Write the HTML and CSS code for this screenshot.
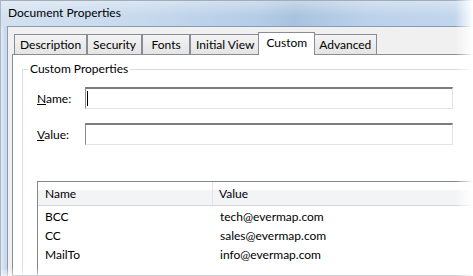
FILE: index.html
```html
<!DOCTYPE html>
<html lang="en">
  <head>
    <meta charset="UTF-8" />
    <meta name="viewport" content="width=device-width, initial-scale=1.0" />
    <title>Document Properties</title>
    <link rel="stylesheet" href="styles.css">
  </head>
  <body>
    <div class="window">
      <!-- title bar -->
      <div class="title-bar">Document Properties</div>

      <div class="frame">
        <div class="client">
          <!-- tabs -->
          <div class="tabs">
            <div class="tab">Description</div>
            <div class="tab">Security</div>
            <div class="tab">Fonts</div>
            <div class="tab">Initial View</div>
            <div class="tab active">Custom</div>
            <div class="tab">Advanced</div>
          </div>

          <div class="tab-panel">
            <fieldset class="group">
              <legend>Custom Properties</legend>

              <div class="field-row">
                <label class="field-label"><u>N</u>ame:</label>
                <div class="text-box"><span class="caret"></span></div>
              </div>
              <div class="field-row">
                <label class="field-label"><u>V</u>alue:</label>
                <div class="text-box"></div>
              </div>

              <!-- property list -->
              <div class="prop-list">
                <div class="list-header">
                  <div class="col-name">Name</div>
                  <div class="col-value">Value</div>
                </div>
                <div class="list-body">
                  <div class="list-row">
                    <div class="col-name">BCC</div>
                    <div class="col-value">tech@evermap.com</div>
                  </div>
                  <div class="list-row">
                    <div class="col-name">CC</div>
                    <div class="col-value">sales@evermap.com</div>
                  </div>
                  <div class="list-row">
                    <div class="col-name">MailTo</div>
                    <div class="col-value">info@evermap.com</div>
                  </div>
                </div>
              </div>
            </fieldset>
          </div>
        </div>
      </div>

      <!-- screenshot edge fades -->
      <div class="fade-right"></div>
      <div class="fade-bottom"></div>
    </div>
  </body>
</html>
```

FILE: styles.css
```css
body {
  margin: 0;
  font-family: Lato, "Noto Sans", sans-serif;
  font-size: 12px;
  color: #000;
  background: #fff;
  overflow: hidden;
}

.window {
  position: relative;
  width: 473px;
  height: 276px;
  overflow: hidden;
  display: flex;
  flex-direction: column;
  background: linear-gradient(to right, #e4ecf5, #c9daec 4px, #c3d6eb);
  border-left: 1px solid #a9b6c4;
  box-sizing: border-box;
}

/* title bar */
.title-bar {
  flex-shrink: 0;
  height: 26px;
  box-sizing: border-box;
  padding: 4px 0 0 7px;
  line-height: 16px;
  border-top: 1px solid #a3adb9;
  background:
    linear-gradient(rgba(255, 255, 255, 0.35), rgba(255, 255, 255, 0) 60%),
    linear-gradient(to right, #d3e1f0, #c6d9ed 30%, #b4cce6 55%, #a9c3df 62%, #bcd2ea 78%, #c3d7ed);
}

.frame {
  flex: 1;
  min-height: 0;
  display: flex;
  padding-left: 6px;
}

.client {
  flex: 1;
  min-height: 0;
  display: flex;
  flex-direction: column;
  background: #f0f0f0;
  border-top: 1px solid #8e9aa8;
  border-left: 1px solid #8e9aa8;
}

/* tabs */
.tabs {
  flex-shrink: 0;
  display: flex;
  align-items: flex-end;
  height: 27px;
  padding-left: 6px;
}
.tab {
  height: 20px;
  min-width: 48px;
  box-sizing: border-box;
  padding: 0 5px;
  line-height: 19px;
  text-align: center;
  border: 1px solid #898c95;
  border-bottom: none;
  background: linear-gradient(#f4f4f4, #e4e4e4);
  white-space: nowrap;
}
.tab.active {
  position: relative;
  z-index: 1;
  height: 23px;
  margin: 0 -2px -1px -2px;
  padding: 0 7px;
  line-height: 19px;
  background: #fff;
}

.tab-panel {
  flex: 1;
  min-height: 0;
  overflow: hidden;
  margin: 0 -40px 0 4px;
  background: #fff;
  border: 1px solid #898c95;
  display: flex;
  flex-direction: column;
}

/* group box */
.group {
  flex: 1;
  margin: 6px 0 0 9px;
  padding: 0;
  min-width: 0;
  border: 1px solid #d5dfe5;
  border-bottom: none;
}
.group legend {
  margin-left: 5px;
  padding: 0 2px;
  line-height: 16px;
}

.field-row {
  display: flex;
  align-items: center;
  padding-left: 14px;
  margin-top: 10px;
}
.field-row + .field-row {
  margin-top: 14px;
}
.field-label {
  width: 48px;
}
.text-box {
  width: 368px;
  height: 22px;
  box-sizing: border-box;
  border-top: 2px solid #7c7c7c;
  border-left: 1px solid #8a8a8a;
  border-right: 1px solid #e3e3e3;
  border-bottom: 1px solid #e3e3e3;
  background: #fff;
  padding: 2px 0 0 1px;
}
.caret {
  display: block;
  width: 1px;
  height: 15px;
  background: #000;
}

/* list */
.prop-list {
  margin: 36px 0 0 14px;
  height: 120px;
  border-top: 1px solid #828790;
  border-left: 1px solid #828790;
  background: #fff;
}
.list-header {
  display: flex;
  height: 24px;
  box-sizing: border-box;
  border-bottom: 1px solid #d5d5d5;
  background: linear-gradient(#fff 0, #fff 35%, #f3f4f6 35%, #f3f4f6 100%);
}
.list-header .col-name {
  border-right: 1px solid #e2e4e8;
}
.list-header > div {
  padding-top: 2px;
  line-height: 20px;
}
.col-name {
  width: 175px;
  box-sizing: border-box;
  padding-left: 7px;
}
.col-value {
  padding-left: 7px;
}
.list-header .col-value {
  padding-left: 6px;
}
.list-body {
  padding-top: 1px;
}
.list-row {
  display: flex;
  height: 19px;
  line-height: 19px;
}

/* soft edges of the screenshot */
.fade-right {
  position: absolute;
  top: 0;
  right: 0;
  bottom: 0;
  width: 18px;
  background: linear-gradient(to right, rgba(255, 255, 255, 0), #fff);
}
.fade-bottom {
  position: absolute;
  left: 0;
  right: 0;
  bottom: 0;
  height: 8px;
  background: linear-gradient(rgba(255, 255, 255, 0), rgba(255, 255, 255, 0.6));
}
```
